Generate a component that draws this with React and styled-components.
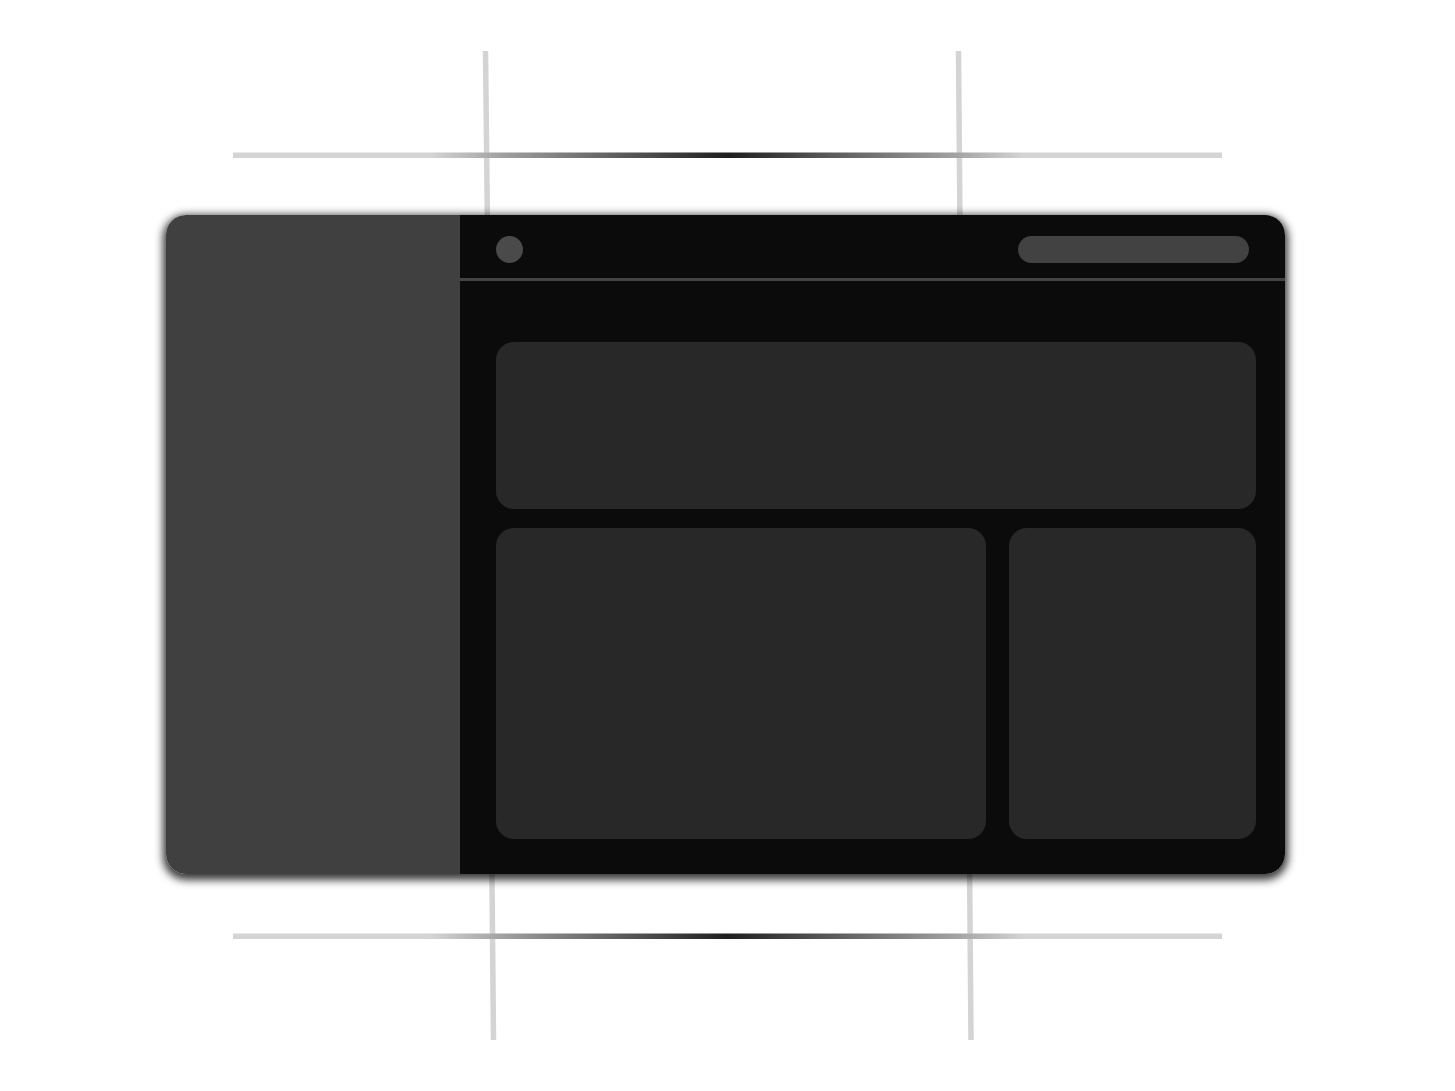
import React from "react";
import styled, { createGlobalStyle } from "styled-components";

const Global = createGlobalStyle`
  html, body { margin: 0; padding: 0; background: #ffffff; }
  body { font-family: "Inter", "Liberation Sans", sans-serif; }
`;

const Canvas = styled.div`
  position: relative;
  width: 1455px;
  height: 1091px;
  overflow: hidden;
  background: #ffffff;
`;

const Guides = styled.svg`
  position: absolute;
  inset: 0;
  width: 1455px;
  height: 1091px;
  z-index: 0;
`;

const Stage = styled.div`
  position: relative;
  z-index: 1;
  padding: 215px 0 0 166px;
`;

const Window = styled.div`
  display: flex;
  width: 1119px;
  height: 659px;
  border-radius: 20px;
  overflow: hidden;
  box-shadow: 0 3px 9px 3px rgba(0, 0, 0, 0.78);
`;

const Sidebar = styled.aside`
  flex: 0 0 294px;
  background: #404040;
`;

const Main = styled.div`
  flex: 1;
  display: flex;
  flex-direction: column;
  background: #0b0b0b;
`;

const Header = styled.header`
  flex: 0 0 66px;
  display: flex;
  align-items: center;
  justify-content: space-between;
  padding: 5px 36px 0 36px;
  box-sizing: border-box;
  border-bottom: 3px solid #444444;
`;

const Avatar = styled.div`
  width: 27px;
  height: 27px;
  border-radius: 50%;
  background: #4a4a4a;
`;

const Search = styled.div`
  width: 231px;
  height: 27px;
  border-radius: 14px;
  background: #424242;
`;

const Content = styled.div`
  flex: 1;
  display: grid;
  grid-template-columns: 490px 1fr;
  grid-template-rows: 167px 1fr;
  gap: 19px 23px;
  padding: 61px 29px 35px 36px;
`;

const Panel = styled.div`
  background: #282828;
  border-radius: 18px;
  grid-column: ${(p) => (p.$wide ? "1 / -1" : "auto")};
`;

const vLines = [
  [485.5, 51, 487.5, 230],
  [958.5, 51, 960, 230],
  [491.8, 860, 493.5, 1040],
  [969.5, 860, 971, 1040],
];

export default function App() {
  return (
    <>
      <Global />
      <Canvas>
        <Guides viewBox="0 0 1455 1091">
          <defs>
            <linearGradient id="hg" x1="233" y1="0" x2="1222" y2="0" gradientUnits="userSpaceOnUse">
              <stop offset="0" stopColor="#d4d4d4" />
              <stop offset="0.2" stopColor="#d4d4d4" />
              <stop offset="0.27" stopColor="#a2a2a2" />
              <stop offset="0.5" stopColor="#1e1e1e" />
              <stop offset="0.73" stopColor="#a2a2a2" />
              <stop offset="0.8" stopColor="#d4d4d4" />
              <stop offset="1" stopColor="#d4d4d4" />
            </linearGradient>
          </defs>
          {vLines.map(([x1, y1, x2, y2], i) => (
            <line key={i} x1={x1} y1={y1} x2={x2} y2={y2} stroke="#d4d4d4" strokeWidth="5.5" />
          ))}
          <rect x="233" y="152.5" width="989" height="5.5" fill="url(#hg)" />
          <rect x="233" y="933.5" width="989" height="5.5" fill="url(#hg)" />
        </Guides>
        <Stage>
          <Window>
            <Sidebar />
            <Main>
              <Header>
                <Avatar />
                <Search />
              </Header>
              <Content>
                <Panel $wide />
                <Panel />
                <Panel />
              </Content>
            </Main>
          </Window>
        </Stage>
      </Canvas>
    </>
  );
}
